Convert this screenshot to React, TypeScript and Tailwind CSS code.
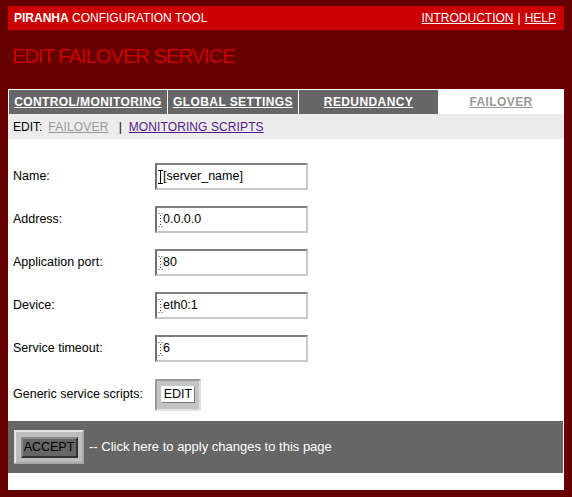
import React from 'react';

const font = { fontFamily: '"Liberation Sans", Arial, sans-serif' };

function Cursor({ solid = false }: { solid?: boolean }) {
  return (
    <svg width="5" height="14" viewBox="0 0 5 14" className="shrink-0">
      {solid ? (
        <path d="M0 0.5h5M2.5 0.5v13M0 13.5h5" stroke="#000" strokeWidth="1" fill="none" />
      ) : (
        <path d="M0.5 0.5h1M3.5 0.5h1M2.5 2v1M2.5 5v1M2.5 8v1M2.5 11v1M0.5 13.5h1M3.5 13.5h1" stroke="#444" strokeWidth="1" fill="none" />
      )}
    </svg>
  );
}

function Field({ label, value, first = false }: { label: string; value: string; first?: boolean }) {
  return (
    <div className="flex items-center h-[27px]">
      <span className="w-[142px] text-[12.5px] text-black">{label}</span>
      <div className="w-[153px] h-[27px] flex items-center pl-[1px] border-2 border-t-[#7f7f7f] border-l-[#6f6f6f] border-b-[#c8c8c8] border-r-[#c8c8c8] bg-white text-[12.5px] text-black">
        <Cursor solid={first} />
        <span>{value}</span>
      </div>
    </div>
  );
}

export default function App() {
  return (
    <div className="w-[572px] h-[497px] bg-[#660000] pt-[6px] px-[8px] flex flex-col" style={font}>
      {/* top bar */}
      <div className="h-[24px] bg-[#cc0000] flex items-center justify-between px-[6px] text-white text-[12px]">
        <div>
          <span className="font-bold">PIRANHA</span> CONFIGURATION TOOL
        </div>
        <div className="flex items-center gap-[4px] pr-[2px]">
          <span className="underline">INTRODUCTION</span>
          <span>|</span>
          <span className="underline">HELP</span>
        </div>
      </div>

      {/* title */}
      <div className="pt-[14px] pb-[21px] pl-[4px]">
        <h1 className="text-[20px] leading-[24px] tracking-[-0.9px] text-[#cc0000]">EDIT FAILOVER SERVICE</h1>
      </div>

      {/* panel */}
      <div className="bg-white h-[401px] flex flex-col pt-[1px]">
        <div className="flex h-[24px] pl-[1px] gap-[1px] text-[12px] font-bold tracking-[0.4px]">
          <div className="w-[158px] bg-[#666666] flex items-center justify-center text-white underline">CONTROL/MONITORING</div>
          <div className="w-[130px] bg-[#666666] flex items-center justify-center text-white underline">GLOBAL SETTINGS</div>
          <div className="w-[139px] bg-[#666666] flex items-center justify-center text-white underline">REDUNDANCY</div>
          <div className="flex-1 -ml-[1px] bg-white flex items-center justify-center text-[#999999] underline">FAILOVER</div>
        </div>
        <div className="h-[25px] bg-[#ececec] flex items-center pl-[5px] text-[12px] text-black">
          <span>EDIT:</span>
          <span className="ml-[6px] text-[#999999] underline tracking-[0.2px]">FAILOVER</span>
          <span className="ml-[10px]">|</span>
          <span className="ml-[7px] text-[#551a8b] underline tracking-[0.1px]">MONITORING SCRIPTS</span>
        </div>

        {/* form */}
        <div className="flex flex-col gap-[16px] pt-[24px] pl-[5px]">
          <Field label="Name:" value="[server_name]" first />
          <Field label="Address:" value="0.0.0.0" />
          <Field label="Application port:" value="80" />
          <Field label="Device:" value="eth0:1" />
          <Field label="Service timeout:" value="6" />
          <div className="flex items-center h-[33px]">
            <span className="w-[142px] text-[12.5px] text-black">Generic service scripts:</span>
            <div className="w-[46px] h-[32px] flex items-center justify-center border-2 border-t-[#9a9a9a] border-l-[#9a9a9a] border-b-[#e0e0e0] border-r-[#e0e0e0] bg-[#c4c4c4]">
              <span className="h-[17px] px-[2px] flex items-center bg-white text-[12.5px] text-black border border-t-[#ffffff] border-l-[#ffffff] border-b-[#7a7a7a] border-r-[#7a7a7a]">EDIT</span>
            </div>
          </div>
        </div>

        {/* accept bar */}
        <div className="mt-[10px] mr-[1px] h-[52px] bg-[#666666] flex items-center pl-[6px]">
          <div className="w-[70px] h-[34px] flex items-center justify-center border-2 border-t-[#e4e4e4] border-l-[#e4e4e4] border-b-[#a8a8a8] border-r-[#a8a8a8] bg-[#bdbdbd]">
            <span className="w-[57px] h-[21px] flex items-center justify-center bg-[#666666] text-[12.5px] text-black border-2 border-t-[#8a8a8a] border-l-[#8a8a8a] border-b-[#333333] border-r-[#333333]">ACCEPT</span>
          </div>
          <span className="ml-[5px] text-[13px] text-white">-- Click here to apply changes to this page</span>
        </div>
      </div>
    </div>
  );
}
